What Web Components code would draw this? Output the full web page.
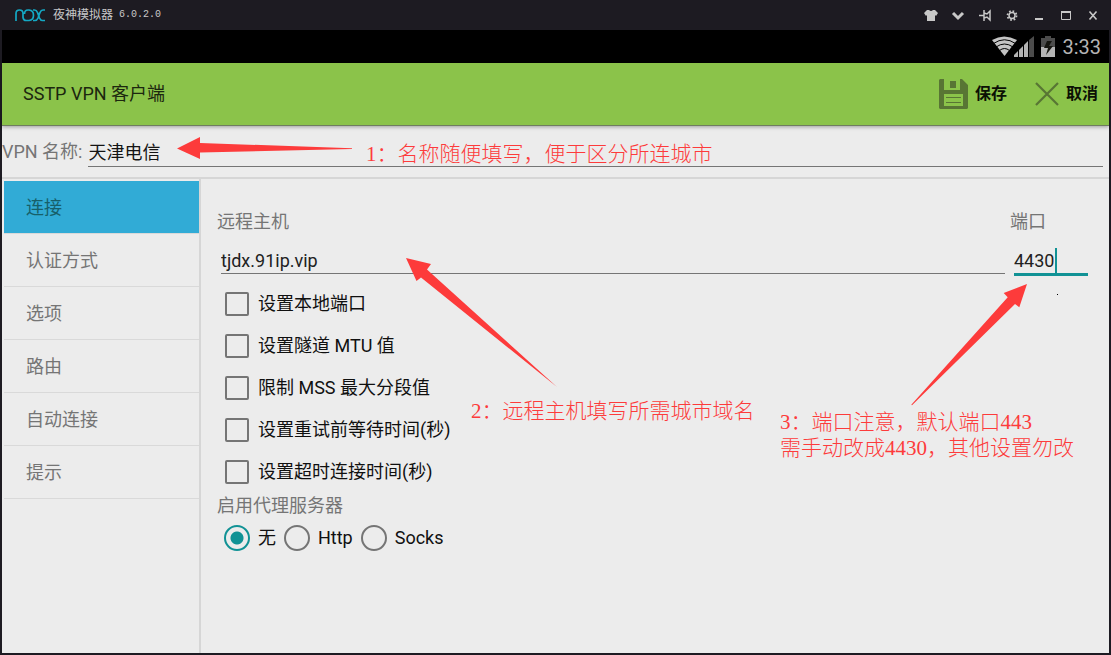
<!DOCTYPE html>
<html lang="zh-CN">
<head>
<meta charset="utf-8">
<title>夜神模拟器</title>
<style>
  html, body { margin: 0; }
  body { font: 18px/24px Roboto, "Noto Sans CJK SC", sans-serif; color: #212121; background: #1d1b22; }
</style>
</head>
<body>
<emulator-window>
  <window-titlebar slot="title" version="6.0.2.0">夜神模拟器</window-titlebar>
  <status-bar time="3:33"></status-bar>
  <app-toolbar>SSTP VPN 客户端
    <tool-action slot="actions" icon="save">保存</tool-action>
    <tool-action slot="actions" icon="cancel">取消</tool-action>
  </app-toolbar>
  <name-field label="VPN 名称:" value="天津电信"></name-field>
  <split-view>
    <side-menu slot="side">
      <menu-item selected>连接</menu-item>
      <menu-item>认证方式</menu-item>
      <menu-item>选项</menu-item>
      <menu-item>路由</menu-item>
      <menu-item>自动连接</menu-item>
      <menu-item>提示</menu-item>
    </side-menu>
    <connection-form></connection-form>
  </split-view>
  <guide-notes slot="overlay"></guide-notes>
</emulator-window>

<script>
const define = (name, render) => customElements.define(name, class extends HTMLElement {
  constructor() { super(); this.attachShadow({ mode: 'open' }); }
  connectedCallback() {
    const t = document.createElement('template');
    t.innerHTML = render(this);
    this.shadowRoot.replaceChildren(t.content.cloneNode(true));
  }
});

define('emulator-window', () => `
  <style>
    :host { display: flex; flex-direction: column; position: relative; min-height: 100vh; box-sizing: border-box; padding: 0 2px 2px; background: #1d1b22; overflow: hidden; }
    main { flex: 1; display: flex; flex-direction: column; background: #ececec; }
  </style>
  <slot name="title"></slot>
  <main><slot></slot></main>
  <slot name="overlay"></slot>`);

const glyphs = {
  '主题': '<path fill="currentColor" d="M4 3h2q2 2 4 0h2l3 3-2 3-1-1v6H4V8L3 9 1 6z"/>',
  '菜单': '<path fill="none" stroke="currentColor" stroke-width="3" d="M3 6l5 5 5-5"/>',
  '置顶': '<path fill="none" stroke="currentColor" stroke-width="1.5" d="M2 8.500h5M7 3v11M7 6l3 1 3-3v9l-3-3-3 1"/>',
  '设置': '<circle cx="8" cy="8.500" r="3" fill="none" stroke="currentColor" stroke-width="1.5"/><circle cx="8" cy="8.500" r="4.500" fill="none" stroke="currentColor" stroke-width="1.8" stroke-dasharray="1.7 1.834"/>',
  '最小化': '<path fill="currentColor" d="M4 11h8v2H4z"/>',
  '最大化': '<path fill="none" stroke="currentColor" d="M3.500 4.500h9v8h-9z"/><path fill="currentColor" d="M3 4h10v2H3z"/>',
  '关闭': '<path fill="none" stroke="currentColor" stroke-width="1.6" d="M4.500 4.500l7 8M11.500 4.500l-7 8"/>'
};

define('window-titlebar', el => `
  <style>
    :host { display: flex; align-items: center; height: 30px; padding: 0 3px 0 13px; color: #c8c8c8; font-size: 12px; line-height: 16px; }
    svg { display: block; }
    .logo { margin-right: 7px; }
    .version { font: 10px/16px "Liberation Mono", monospace; margin-left: 6px; flex: 1; }
    button { width: 27px; height: 30px; padding: 0; border: 0; background: none; color: #c8c8c8; display: grid; place-items: center; }
  </style>
  <svg class="logo" width="31" height="14" viewBox="0 0 31 14" fill="none" stroke="#14a8c4" stroke-width="1.7" aria-label="nox">
    <path d="M1 13V5.500Q1 2 4.500 2T8 5.500V9.500Q8.500 12.500 11 12.500H14Q18.500 12 18.500 7.200T14 2H13Q9.500 2 9.500 6"/>
    <path d="M18 2h1.500q2 0 3 2.500l2 5.500q1 2.500 3 2.500H30M30 2h-2q-2 0-3 2.500l-2 5.500q-1 2.500-3 2.500H18"/>
  </svg>
  <slot></slot><span class="version">${el.getAttribute('version')}</span>
  ${Object.entries(glyphs).map(([n, g]) => `<button type="button" aria-label="${n}"><svg width="16" height="16" viewBox="0 0 16 16">${g}</svg></button>`).join('')}`);

define('status-bar', el => `
  <style>
    :host { display: flex; align-items: center; justify-content: flex-end; height: 33px; padding-right: 8px; background: #000; color: #b4b4b4; font-size: 20px; }
    svg { margin-right: 6px; }
  </style>
  <svg width="65" height="22" viewBox="0 0 65 22" aria-hidden="true">
    <path d="M1 4Q13-3 26 4L13.500 20z" fill="#c4c4c4"/>
    <path d="M2.500 7.500Q13.500 0 24.500 7.500M5 11q8.500-6 17 0M8.500 14.500q5-4 10 0" fill="none" stroke="#000" stroke-width="1"/>
    <path d="M23 21v-2l4-4v6z" fill="#b4b4b4"/><path d="M28 21v-7l4-4v11zM33 21V9l4-4v16z" fill="#b4b4b4"/><path d="M38 21V4l5-4v21z" fill="#4c4c4c"/>
    <path d="M50 2h4V0h6v2h4v9H50z" fill="#4c4c4c"/><path d="M50 11h14v10H50z" fill="#b4b4b4"/>
    <path d="M56 5l-3 7h4l-2 7 7-9h-4l3-5z" fill="#151510"/>
  </svg>
  <time>${el.getAttribute('time')}</time>`);

define('app-toolbar', () => `
  <style>
    :host { display: block; position: relative; z-index: 1; }
    header { display: flex; align-items: center; height: 62px; padding: 0 11px 0 21px; background: #8bc34a; color: #1c270f; border-bottom: 1px solid #6f7d60; box-shadow: 0 1px 4px #0005; }
    h1 { flex: 1; margin: 0; font-size: 18px; line-height: 24px; font-weight: 400; }
    div { display: flex; align-items: center; gap: 28px; }
  </style>
  <header><h1><slot></slot></h1><div><slot name="actions"></slot></div></header>`);

define('tool-action', el => `
  <style>
    :host { display: block; }
    button { display: flex; align-items: center; gap: 7px; height: 30px; padding: 0; border: 0; background: none; color: #0b1004; font: inherit; font-size: 16px; font-weight: 700; }
    svg { display: block; }
  </style>
  <button type="button">${el.getAttribute('icon') === 'save'
    ? `<svg width="29" height="30" viewBox="0 0 29 30" aria-hidden="true"><path fill="#587534" fill-rule="evenodd" d="M1 0h4v11h16V0h2l6 6v23l-1 1H1l-1-1V1zM5 15v12h19V15z"/><path fill="#587534" d="M11 2h6v7h-6zM7 18h15v1H7zM7 23h15v1H7z"/></svg>`
    : `<svg width="24" height="24" viewBox="0 0 24 24" aria-hidden="true"><path d="M1 1l22 22M23 1L1 23" stroke="#587534" stroke-width="2.200"/></svg>`}
    <slot></slot></button>`);

define('name-field', el => `
  <style>
    :host { display: block; border-bottom: 2px solid #d6d6d6; padding: 10px 6px 10px 0; }
    label { display: flex; gap: 6px; color: #757575; align-items: center; }
    input { flex: 1; min-width: 0; height: 31px; padding: 0; box-sizing: border-box; border: 0; border-bottom: 1px solid #757575; background: none; font: inherit; color: #141414; outline: 0; }
  </style>
  <label>${el.getAttribute('label')}<input value="${el.getAttribute('value')}"></label>`);

define('split-view', () => `
  <style>
    :host { flex: 1; display: grid; grid-template-columns: 199px 1fr; }
    aside { border-right: 2px solid #d6d6d6; padding: 2px 0 0 2px; }
  </style>
  <aside><slot name="side"></slot></aside>
  <section><slot></slot></section>`);

define('side-menu', () => `<style>:host, nav { display: block; }</style><nav><slot></slot></nav>`);

define('menu-item', () => `
  <style>
    :host { display: block; border-bottom: 1px solid #d9d9d9; }
    button { display: block; box-sizing: border-box; width: 100%; height: 52px; padding: 2px 22px 0; text-align: left; border: 0; background: none; font: inherit; color: #757575; }
    :host([selected]) button { background: #31abd6; color: #175f69; }
  </style>
  <button type="button"><slot></slot></button>`);

define('line-field', el => `
  <style>
    :host { display: block; }
    label { display: block; color: #757575; }
    .line { display: flex; align-items: center; height: 26px; margin: 13px 0 0 4px; border-bottom: 1px solid #757575; }
    input { width: 100%; min-width: 0; height: 26px; padding: 0; border: 0; background: none; outline: 0; font: inherit; color: #212121; }
    :host([active]) .line { border-bottom: 3px solid #119295; }
    :host([active]) input { width: 41px; caret-color: transparent; }
    i { display: none; width: 2px; height: 25px; background: #119295; }
    :host([active]) i { display: block; }
  </style>
  <label for="f">${el.getAttribute('label')}</label>
  <div class="line"><input id="f" value="${el.getAttribute('value')}"><i></i></div>`);

define('check-option', () => `
  <style>
    :host { display: block; }
    label { display: flex; align-items: center; gap: 9px; height: 42px; color: #101010; }
    input { appearance: none; box-sizing: border-box; width: 24px; height: 24px; margin: 0; border: 2px solid #757575; border-radius: 2px; }
    input:checked { background: #119295; }
  </style>
  <label><input type="checkbox"><slot></slot></label>`);

define('proxy-choice', () => `
  <style>
    :host { display: block; }
    fieldset { margin: 0; padding: 0; border: 0; }
    legend { padding: 0; color: #757575; }
    div { display: flex; gap: 8px; padding-left: 7px; }
    label { display: flex; align-items: center; gap: 8px; height: 40px; color: #101010; }
    input { appearance: none; box-sizing: border-box; width: 26px; height: 26px; margin: 0; border: 2px solid #757575; border-radius: 50%; }
    input:checked { border-color: #119295; background: radial-gradient(circle, #119295 6px, transparent 7px); }
  </style>
  <fieldset><legend>启用代理服务器</legend><div>
    <label><input type="radio" name="proxy" checked>无</label>
    <label><input type="radio" name="proxy">Http</label>
    <label><input type="radio" name="proxy">Socks</label>
  </div></fieldset>`);

define('connection-form', () => `
  <style>
    :host { display: block; padding: 31px 21px 0 16px; }
    .host { display: grid; grid-template-columns: 1fr 78px; gap: 5px; }
    .checks { padding: 7px 0 1px 8px; }
  </style>
  <form>
    <div class="host">
      <line-field label="远程主机" value="tjdx.91ip.vip"></line-field>
      <line-field label="端口" value="4430" active></line-field>
    </div>
    <div class="checks">
      <check-option>设置本地端口</check-option>
      <check-option>设置隧道 MTU 值</check-option>
      <check-option>限制 MSS 最大分段值</check-option>
      <check-option>设置重试前等待时间(秒)</check-option>
      <check-option>设置超时连接时间(秒)</check-option>
    </div>
    <proxy-choice></proxy-choice>
  </form>`);

/* Callouts that float over the form: an arrow and a line of advice each. */
define('guide-notes', () => `
  <style>
    :host { position: absolute; inset: 0; z-index: 2; pointer-events: none; color: #fd3b3b; font: 300 21px/26px "Liberation Serif", "Noto Sans CJK SC", serif; }
    p, svg, i { position: absolute; margin: 0; white-space: nowrap; }
    path { fill: #fd3b3b; }
    .a1 { left: 177px; top: 137px; } .t1 { left: 366px; top: 141px; }
    .a2 { left: 406px; top: 258px; } .t2 { left: 471px; top: 398px; }
    .a3 { right: 84px; top: 284px; } .t3 { right: 37px; top: 409px; }
    i { right: 53px; top: 294px; width: 1px; height: 1px; background: #000; }
  </style>
  <svg class="a1" width="176" height="22"><path d="M0 11.500L23 0V6L175 11.200V12L23 15.500V22z"/></svg>
  <p class="t1">1：名称随便填写，便于区分所连城市</p>
  <svg class="a2" width="151" height="129"><path d="M0 0L25 6 21 11.500 151 129 15 19.500 10.500 23z"/></svg>
  <p class="t2">2：远程主机填写所需城市域名</p>
  <svg class="a3" width="116" height="122"><path d="M116 0L108.300 23.300 104 20 1 121.300 .3 120.700 96.700 13.300 92.700 9z"/></svg>
  <p class="t3">3：端口注意，默认端口443<br>需手动改成4430，其他设置勿改</p>
  <i></i>`);
</script>
</body>
</html>
